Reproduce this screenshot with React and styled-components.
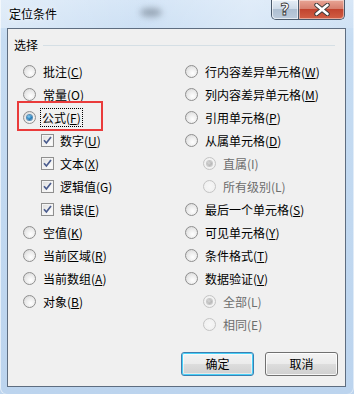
import React from 'react'
import styled, { createGlobalStyle, css } from 'styled-components'

const GlobalStyle = createGlobalStyle`
  html, body { margin: 0; padding: 0; background: #bcd4ee; }
  #root { width: 354px; height: 394px; }
  * { box-sizing: border-box; }
`

const FONT = `"Noto Sans CJK SC", "Microsoft YaHei", "DejaVu Sans", sans-serif`

const leftItems = [
  { label: '批注', key: 'C' },
  { label: '常量', key: 'O' },
  { label: '公式', key: 'F', checked: true, focus: true, highlight: true },
  { label: '数字', key: 'U', box: true },
  { label: '文本', key: 'X', box: true },
  { label: '逻辑值', key: 'G', box: true, plain: true },
  { label: '错误', key: 'E', box: true },
  { label: '空值', key: 'K' },
  { label: '当前区域', key: 'R' },
  { label: '当前数组', key: 'A' },
  { label: '对象', key: 'B' },
]

const rightItems = [
  { label: '行内容差异单元格', key: 'W' },
  { label: '列内容差异单元格', key: 'M' },
  { label: '引用单元格', key: 'P' },
  { label: '从属单元格', key: 'D' },
  { label: '直属', key: 'I', sub: true, disabled: true, checked: true },
  { label: '所有级别', key: 'L', sub: true, disabled: true },
  { label: '最后一个单元格', key: 'S' },
  { label: '可见单元格', key: 'Y' },
  { label: '条件格式', key: 'T' },
  { label: '数据验证', key: 'V' },
  { label: '全部', key: 'L', sub: true, disabled: true, checked: true },
  { label: '相同', key: 'E', sub: true, disabled: true },
]

const Option = ({ item }) => {
  const indent = item.box || item.sub
  return (
    <Row $indent={indent}>
      {item.box ? (
        <CheckBox>
          <svg width="9" height="9" viewBox="0 0 9 9">
            <path d="M1 4.2 L3.4 7 L8 1" fill="none" stroke="#4a5c8e" strokeWidth="1.7" />
          </svg>
        </CheckBox>
      ) : (
        <Radio $checked={item.checked} $disabled={item.disabled} />
      )}
      <Label $disabled={item.disabled} $focus={item.focus}>
        {item.label}(
        {item.disabled || item.plain ? item.key : <u>{item.key}</u>})
      </Label>
      {item.highlight && <Highlight />}
    </Row>
  )
}

const App = () => {
  return (
    <>
      <GlobalStyle />
      <Window>
        <TitleBar>
          <Title>定位条件</Title>
          <Blur />
          <Controls>
            <HelpButton>?</HelpButton>
            <CloseButton>
              <svg width="18" height="13" viewBox="0 0 18 13">
                <path d="M3.5 2 L14.5 11 M14.5 2 L3.5 11" stroke="#3a3a3a" strokeWidth="4.4" strokeLinecap="round" />
                <path d="M3.5 2 L14.5 11 M14.5 2 L3.5 11" stroke="#ffffff" strokeWidth="2.6" strokeLinecap="round" />
              </svg>
            </CloseButton>
          </Controls>
        </TitleBar>
        <Client>
          <GroupHeader>
            <span>选择</span>
            <GroupLine />
          </GroupHeader>
          <Columns>
            <Column>
              {leftItems.map((it, i) => <Option key={i} item={it} />)}
            </Column>
            <Column>
              {rightItems.map((it, i) => <Option key={i} item={it} />)}
            </Column>
          </Columns>
          <Footer>
            <Button $default>确定</Button>
            <Button>取消</Button>
          </Footer>
        </Client>
      </Window>
    </>
  )
}

export default App

const Window = styled.div`
  width: 354px;
  height: 394px;
  display: flex;
  flex-direction: column;
  font-family: ${FONT};
  font-size: 12px;
  color: #000;
  background: linear-gradient(180deg, #d3e4f6 0px, #c6dcf2 40px, #bcd4ee 100%);
  border-radius: 0 0 6px 6px;
  box-shadow: inset 1px 0 0 rgba(255,255,255,0.6), inset -1px 0 0 rgba(255,255,255,0.5);
  position: relative;
  overflow: hidden;
`

const TitleBar = styled.div`
  height: 28px;
  display: flex;
  align-items: flex-start;
  position: relative;
  background: linear-gradient(100deg, rgba(255,255,255,0.35) 0%, rgba(255,255,255,0.05) 40%, rgba(255,255,255,0.3) 70%, rgba(255,255,255,0.1) 100%);
`

const Title = styled.div`
  padding: 6px 0 0 9px;
  font-size: 12px;
  line-height: 16px;
  color: #000;
  text-shadow: 0 0 6px rgba(255,255,255,0.9);
`

const Blur = styled.div`
  position: absolute;
  left: 140px;
  top: 8px;
  width: 22px;
  height: 9px;
  border-radius: 50%;
  background: rgba(80, 90, 105, 0.45);
  filter: blur(3px);
`

const Controls = styled.div`
  margin-left: auto;
  margin-right: 9px;
  display: flex;
  height: 20px;
  border: 1px solid #4b5a6c;
  border-top: none;
  border-radius: 0 0 5px 5px;
  overflow: hidden;
`

const HelpButton = styled.div`
  width: 27px;
  display: flex;
  align-items: center;
  justify-content: center;
  font-family: "DejaVu Sans", sans-serif;
  font-weight: bold;
  font-size: 16px;
  line-height: 16px;
  color: #fff;
  -webkit-text-stroke: 0.8px #333;
  background: linear-gradient(180deg, #e6eef7 0%, #cfdbe8 45%, #aebfd2 50%, #bccbdc 100%);
  border-right: 1px solid #4b5a6c;
  box-shadow: inset 0 0 0 1px rgba(255,255,255,0.6);
  border-radius: 0 0 0 4px;
`

const CloseButton = styled.div`
  width: 45px;
  display: flex;
  align-items: center;
  justify-content: center;
  background: linear-gradient(180deg, #e8a596 0%, #d7806f 45%, #c2442f 50%, #d15f45 100%);
  box-shadow: inset 0 0 0 1px rgba(255,255,255,0.45);
  border-radius: 0 0 4px 0;
`

const Client = styled.div`
  margin: 0 8px 7px 7px;
  flex: 1;
  display: flex;
  flex-direction: column;
  background: #f0f0f0;
  border: 1px solid #5e6d80;
  padding: 8px 6px 10px 6px;
`

const GroupHeader = styled.div`
  display: flex;
  align-items: center;
  height: 16px;
  line-height: 16px;
  padding-right: 4px;
`

const GroupLine = styled.div`
  flex: 1;
  height: 1px;
  margin-left: 5px;
  background: #d5dfe5;
`

const Columns = styled.div`
  display: grid;
  grid-template-columns: 162px 1fr;
  padding-left: 9px;
  margin-top: 7px;
`

const Column = styled.div`
  display: flex;
  flex-direction: column;
`

const Row = styled.div`
  position: relative;
  height: 23px;
  display: flex;
  align-items: center;
  gap: 4px;
  padding-left: ${p => (p.$indent ? '18px' : '0')};
`

const Radio = styled.span`
  width: 13px;
  height: 13px;
  flex: none;
  border-radius: 50%;
  border: 1px solid ${p => (p.$disabled ? '#c4c4c4' : '#8f8f8f')};
  background: ${p => (p.$disabled
    ? 'radial-gradient(circle at 50% 50%, #f7f7f7 0%, #eeeeee 100%)'
    : 'radial-gradient(circle at 60% 65%, #ffffff 0%, #e9e9e9 55%, #cfcfcf 100%)')};
  display: flex;
  align-items: center;
  justify-content: center;
  margin-right: 1px;
  ${p => p.$checked && css`
    &::after {
      content: '';
      width: 5px;
      height: 5px;
      border-radius: 50%;
      background: ${p.$disabled
        ? 'radial-gradient(circle at 40% 40%, #d8d8d8 0%, #a2a2a2 100%)'
        : 'radial-gradient(circle at 40% 35%, #8fd3f5 0%, #2a86c4 50%, #154e80 100%)'};
      box-shadow: ${p.$disabled ? '0 0 0 1px #c9c9c9' : '0 0 0 1px #5b8fb6'};
    }
  `}
`

const CheckBox = styled.span`
  width: 13px;
  height: 13px;
  flex: none;
  border: 1px solid #8f8f8f;
  background: linear-gradient(135deg, #dcdcdc 0%, #f4f4f4 60%, #ffffff 100%);
  box-shadow: inset 0 0 0 1px #f4f4f4;
  display: flex;
  align-items: center;
  justify-content: center;
`

const Label = styled.span`
  line-height: 17px;
  white-space: nowrap;
  color: ${p => (p.$disabled ? '#6d6d6d' : '#000')};
  padding: 0 1px;
  margin-left: ${p => (p.$focus ? '-1px' : '0')};
  border: 1px dotted ${p => (p.$focus ? '#000' : 'transparent')};
  u { text-underline-offset: 1px; }
`

const Highlight = styled.div`
  position: absolute;
  left: -6px;
  top: -5px;
  width: 86px;
  height: 30px;
  border: 2px solid #ea3b3b;
  pointer-events: none;
`

const Footer = styled.div`
  margin-top: auto;
  display: flex;
  justify-content: flex-end;
  gap: 11px;
  padding-right: 1px;
`

const Button = styled.button`
  width: 73px;
  height: 24px;
  font-family: ${FONT};
  font-size: 12px;
  line-height: 16px;
  color: #000;
  padding: 0;
  border-radius: 3px;
  border: 1px solid ${p => (p.$default ? '#3c7fb1' : '#707070')};
  background: linear-gradient(180deg, #f3f3f3 0%, #ebebeb 49%, #dddddd 50%, #cfcfcf 100%);
  box-shadow: ${p => (p.$default
    ? 'inset 0 0 0 1px #48d0f8, inset 0 0 0 2px rgba(255,255,255,0.5)'
    : 'inset 0 0 0 1px rgba(255,255,255,0.8)')};
`
